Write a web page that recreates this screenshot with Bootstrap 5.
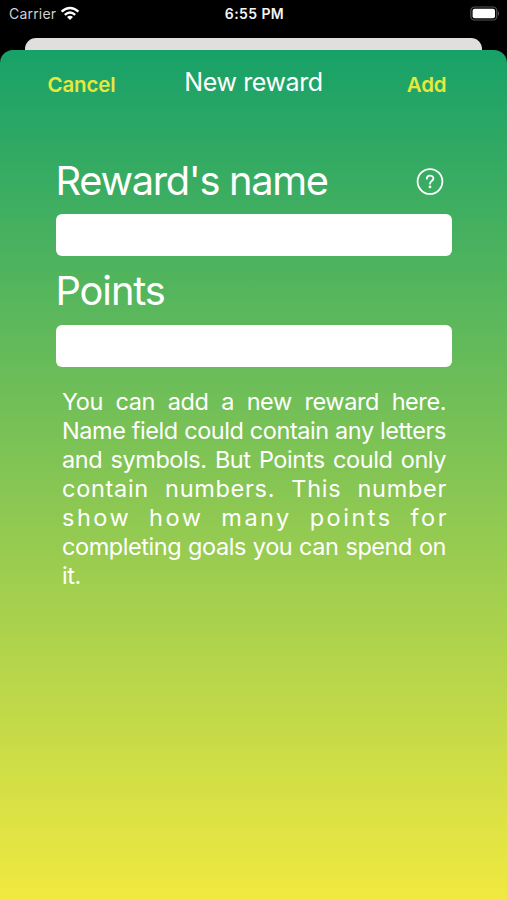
<!DOCTYPE html>
<html lang="en">
<head>
<meta charset="utf-8">
<meta name="viewport" content="width=device-width, initial-scale=1">
<title>New reward</title>
<link href="https://cdn.jsdelivr.net/npm/bootstrap@5.3.0/dist/css/bootstrap.min.css" rel="stylesheet">
<style>
body{background:#000;font-family:Inter,"Liberation Sans",sans-serif;height:900px;overflow:hidden}
.status{height:38px;padding:0 7px 0 9px;color:#f4f4f4;font-size:14px;line-height:28px}
.side{width:130px;height:28px}
.carrier{color:#d0d0d0;letter-spacing:.2px}
.clock{font-weight:600;letter-spacing:.4px}
.sheet-behind{height:12px;margin:0 25px;background:#e0dfdd;border-radius:11px 11px 0 0}
.sheet{height:850px;border-radius:13px 13px 0 0;background:linear-gradient(#17a168,#f1e940)}
.bar{height:64px;padding:0 47.5px}
.bar-side{width:100px;margin-top:6px}
.bar-side-end{padding-right:13px}
.bar-btn{color:#e7e83f;font-size:20.5px;font-weight:600;line-height:24px;letter-spacing:-.15px;text-decoration:none}
.bar-title{font-size:25px;line-height:30px;letter-spacing:-.4px}
.form-area{padding:44px 55px 0 56px}
.field-name{font-size:39.8px;line-height:46px;letter-spacing:-1.3px;font-weight:400;height:46px;white-space:nowrap;text-indent:-.5px}
.field-box{height:41.5px;min-height:0;border:0;border-radius:6px;background:#fff}
.name-box{margin-top:10px}
.points-name{margin:12.5px 0 11px;letter-spacing:-1.1px}
.hint{padding:20px 6px 0 6px;font-size:23.5px;line-height:29.15px}
.hint span{display:block;white-space:nowrap;text-align:justify;text-align-last:justify;letter-spacing:-.43px}
.hint .loose{letter-spacing:.7px;margin-right:-1px}
.hint .looser{letter-spacing:2.5px;margin-right:-3px}
.hint .tail{text-align-last:left}
</style>
</head>
<body>
<header class="status d-flex justify-content-between align-items-start">
  <div class="side d-flex align-items-center">
    <span class="carrier">Carrier</span>
    <svg class="ms-1" width="20" height="16" viewBox="0 0 20 16" fill="none" stroke="#fff" stroke-width="2.4"><path d="M1.6 5.7Q10-1.7 18.4 5.7M4.8 8.9Q10 4.3 15.2 8.9"/><path d="M7 11Q10 8.5 13 11L10 14.1Z" fill="#fff" stroke="none"/></svg>
  </div>
  <span class="clock">6:55 PM</span>
  <div class="side d-flex align-items-center justify-content-end">
    <svg width="31" height="16" viewBox="0 0 31 16"><rect x="1.8" y="1" width="26" height="13" rx="3.7" fill="none" stroke="#555" stroke-width="1.2"/><rect x="3.6" y="2.8" width="22.4" height="9.4" rx="2" fill="#fff"/><path d="M29.1 5Q31 7.5 29.1 10Z" fill="#666"/></svg>
  </div>
</header>
<div class="sheet-behind"></div>
<main class="sheet text-white">
  <nav class="bar d-flex justify-content-between align-items-center">
    <div class="bar-side"><a class="bar-btn" href="#">Cancel</a></div>
    <span class="bar-title">New reward</span>
    <div class="bar-side bar-side-end text-end"><a class="bar-btn" href="#">Add</a></div>
  </nav>
  <form class="form-area">
    <div class="d-flex justify-content-between align-items-center">
      <label class="field-name" for="rewardName">Reward's name</label>
      <svg class="me-2" width="28" height="28" viewBox="0 0 28 28" fill="none" stroke="#fff" stroke-width="1.8" stroke-linecap="round"><circle cx="14" cy="14.5" r="12.4"/><path d="M10.8 11.7C10.9 7.6 17.4 7.7 17.4 11.5C17.4 14 14 14.1 14 16.7"/><circle cx="14" cy="19.9" r=".5" fill="#fff"/></svg>
    </div>
    <input class="form-control field-box name-box" id="rewardName" type="text">
    <label class="field-name points-name d-block" for="points">Points</label>
    <input class="form-control field-box" id="points" type="text">
    <p class="hint mb-0"><span>You can add a new reward here.</span> <span>Name field could contain any letters</span> <span>and symbols. But Points could only</span> <span class="loose">contain numbers. This number</span> <span class="looser">show how many points for</span> <span>completing goals you can spend on</span> <span class="tail">it.</span></p>
  </form>
</main>
<script src="https://cdn.jsdelivr.net/npm/bootstrap@5.3.0/dist/js/bootstrap.bundle.min.js"></script>
</body>
</html>
